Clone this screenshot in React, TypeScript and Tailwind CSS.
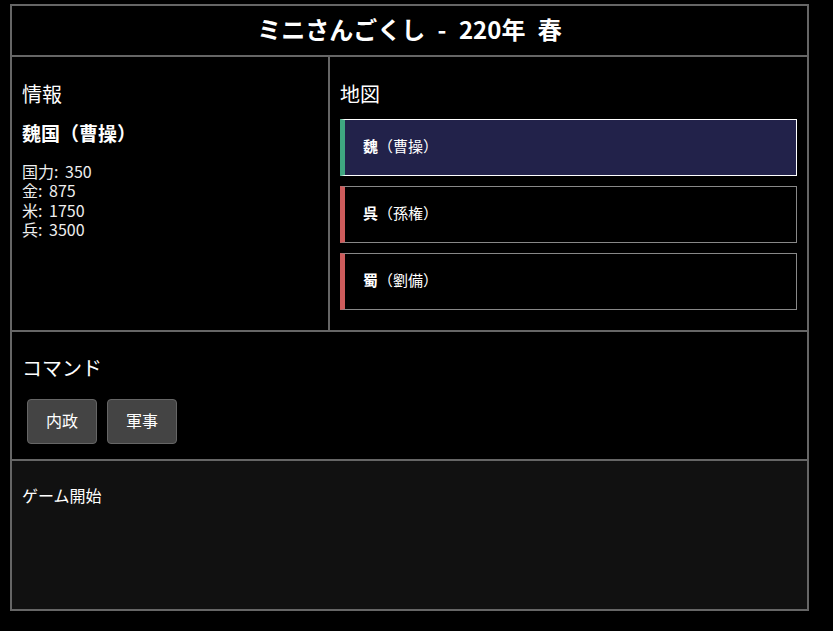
import React from "react";

const font = { fontFamily: '"Noto Sans CJK JP", "Noto Sans", sans-serif' };

const countries = [
  { name: "魏", ruler: "曹操", selected: true },
  { name: "呉", ruler: "孫権", selected: false },
  { name: "蜀", ruler: "劉備", selected: false },
];

const stats = "国力: 350\n金: 875\n米: 1750\n兵: 3500";

export default function App() {
  return (
    <div className="min-h-[631px] w-full bg-black text-white" style={font}>
      <div className="pt-[4px] pl-[10px]">
        <div className="flex h-[607px] w-[799px] flex-col border-2 border-[#666]">
          <div className="flex h-[51px] shrink-0 items-center justify-center border-b-2 border-[#666] pb-[4px]">
            <h1 className="text-[24px] leading-[24px] font-bold [word-spacing:7px]">ミニさんごくし - 220年 春</h1>
          </div>
          <div className="flex h-[275px] shrink-0 border-b-2 border-[#666]">
            <div className="w-[40%] border-r-2 border-[#666] px-[10px] pt-[27px]">
              <h2 className="text-[20px] leading-[20px]">情報</h2>
              <h3 className="mt-[19px] text-[19px] leading-[20px] font-bold">魏国（曹操）</h3>
              <p className="mt-[19px] whitespace-pre-line text-[16px] leading-[19.3px] text-[#eee] [word-spacing:3px]">
                {stats}
              </p>
            </div>
            <div className="w-[60%] px-[10px] pt-[27px]">
              <h2 className="text-[20px] leading-[20px]">地図</h2>
              <div className="mt-[15px] flex flex-col gap-[10px]">
                {countries.map((c) => (
                  <div
                    key={c.name}
                    className={
                      c.selected
                        ? "flex h-[57px] items-center border border-l-[5px] border-white border-l-[#3fa680] bg-[#22224a] pl-[18px] pb-[2px] text-[15px]"
                        : "flex h-[57px] items-center border border-l-[5px] border-[#888] border-l-[#cd5c5c] bg-black pl-[18px] pb-[2px] text-[15px]"
                    }
                  >
                    <strong className="font-bold">{c.name}</strong>
                    <span>（{c.ruler}）</span>
                  </div>
                ))}
              </div>
            </div>
          </div>
          <div className="h-[129px] shrink-0 border-b-2 border-[#666] px-[10px] pt-[26px]">
            <h2 className="text-[20px] leading-[20px]">コマンド</h2>
            <div className="mt-[21px] flex gap-[10px] pl-[5px]">
              <button className="flex h-[45px] w-[70px] items-center justify-center rounded-[4px] border border-[#666] bg-[#444] pb-[3px] text-[16px] text-white">
                内政
              </button>
              <button className="flex h-[45px] w-[70px] items-center justify-center rounded-[4px] border border-[#666] bg-[#444] pb-[3px] text-[16px] text-white">
                軍事
              </button>
            </div>
          </div>
          <div className="flex-1 bg-[#111] px-[10px] pt-[25px]">
            <div className="text-[16px] leading-[18px]">ゲーム開始</div>
          </div>
        </div>
      </div>
    </div>
  );
}
